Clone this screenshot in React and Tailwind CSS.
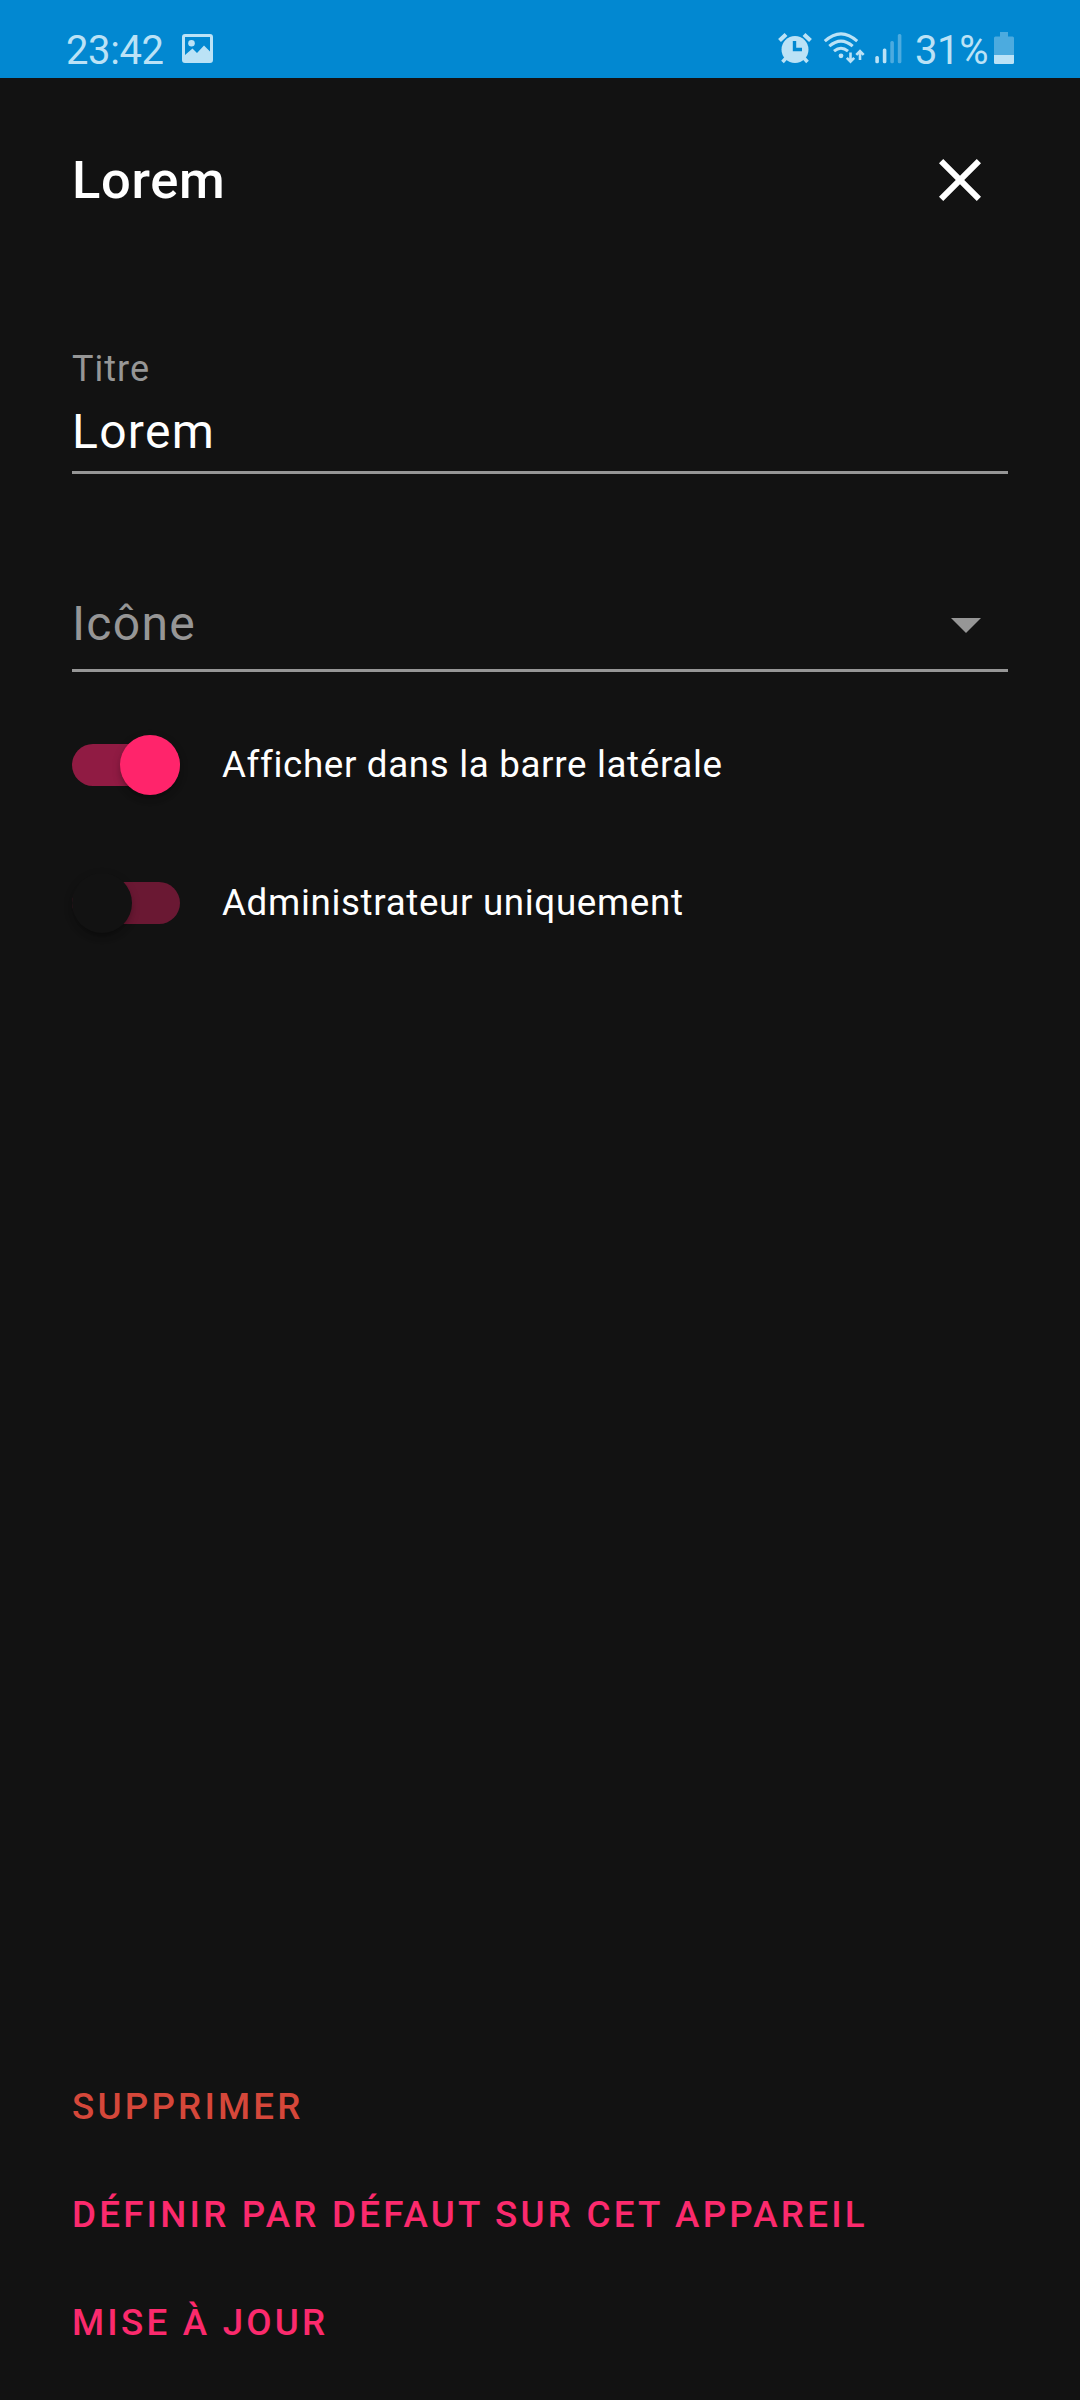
import React, { useState } from 'react';

const StatusBar = () => (
  <div className="flex h-[78px] shrink-0 items-start justify-between bg-[#0288d1] pl-[66px] pr-[66px] pt-[26px] text-[#bbe2f6]">
    <div className="flex items-start">
      <span className="mt-px w-[116px] text-[40px] leading-[48px] tracking-[-0.4px]">23:42</span>
      <svg width="31" height="29" viewBox="0 0 31 29" className="mt-2">
        <path
          fill="currentColor"
          fillRule="evenodd"
          d="M3 0H28Q31 0 31 3V26Q31 29 28 29H3Q0 29 0 26V3Q0 0 3 0ZM3 3V21L10.5 14.5L15 19L22 11.5L28 17.5V3Z"
        />
        <circle cx="9.5" cy="9.3" r="3.3" fill="currentColor" />
      </svg>
    </div>

    <div className="flex items-start">
      {/* alarm */}
      <svg width="34" height="34" viewBox="778 31 34 34" className="mt-[5px]">
        <g stroke="currentColor" strokeWidth="4.2" fill="none">
          <path d="M779.5 40.5L786 34.5M810.5 40.5L804 34.5" />
          <path d="M787 57L782.5 62M803 57L807.5 62" strokeWidth="3.6" />
        </g>
        <circle cx="795" cy="49.5" r="13.5" fill="currentColor" />
        <path d="M794.5 41V49.5H802" stroke="#0288d1" strokeWidth="3.4" fill="none" />
      </svg>
      {/* wifi */}
      <svg width="42" height="34" viewBox="823 31 42 34" className="ml-[11px] mt-[5px]">
        <g stroke="currentColor" strokeWidth="3" fill="none">
          <path d="M824.8 41.2Q841 26.5 857.2 41.2" />
          <path d="M829.3 46.2Q841 36 852.7 46.2" />
          <path d="M834 51.2Q841 45.2 848 51.2" />
          <path d="M850.5 52.5V61M846.8 57.8L850.5 61.6L854.2 57.8" strokeWidth="2.6" />
          <path d="M860 60V51.5M856.3 54.8L860 51L863.7 54.8" strokeWidth="2.6" />
        </g>
        <circle cx="841" cy="55.8" r="2.4" fill="currentColor" />
      </svg>
      {/* signal */}
      <svg width="27" height="34" viewBox="875 31 27 34" className="ml-[10px] mt-[5px]">
        <g fill="currentColor">
          <rect x="875.3" y="56" width="3.6" height="7.2" rx="1.5" />
          <rect x="882.8" y="48.5" width="3.6" height="14.7" rx="1.5" />
          <rect x="890.3" y="41" width="3.6" height="22.2" rx="1.5" opacity="0.4" />
          <rect x="897.8" y="34" width="3.6" height="29.2" rx="1.5" opacity="0.4" />
        </g>
      </svg>
      <span className="ml-[13px] mt-px w-[79px] whitespace-nowrap text-[40px] leading-[48px] tracking-[-0.4px]">31%</span>
      <svg width="20" height="34" viewBox="994 31 20 34" className="mt-[5px]">
        <g fill="currentColor">
          <path d="M1000 32H1008V36.5H1012.5Q1014 36.5 1014 38V55H994V38Q994 36.5 995.5 36.5H1000Z" opacity="0.4" />
          <path d="M994 55H1014V62.5Q1014 64 1012.5 64H995.5Q994 64 994 62.5Z" />
        </g>
      </svg>
    </div>
  </div>
);

const Toggle = ({ label, checked, onChange }) => (
  <label className="flex h-[138px] cursor-pointer items-center">
    <button
      type="button"
      role="switch"
      aria-checked={checked}
      onClick={() => onChange(!checked)}
      className={`flex h-[42px] w-[108px] items-center rounded-full ${
        checked ? 'justify-end bg-[#901b43]' : 'justify-start bg-[#6a1833]'
      }`}
    >
      <span
        className={`h-[60px] w-[60px] shrink-0 rounded-full shadow-[0_5px_6px_-3px_rgba(0,0,0,0.35),0_3px_10px_rgba(0,0,0,0.15)] ${
          checked ? 'bg-[#ff246b]' : 'bg-[#121212]'
        }`}
      />
    </button>
    <span className="ml-[42px] text-[36.75px] tracking-[0.65px] text-white">{label}</span>
  </label>
);

const actions = [
  { id: 'delete', name: 'Supprimer', color: 'text-[#d5473a]' },
  { id: 'default', name: 'Définir par défaut sur cet appareil', color: 'text-[#fb2a6d]' },
  { id: 'update', name: 'Mise à jour', color: 'text-[#fb2a6d]' }
];

const App = () => {
  const [sidebar, setSidebar] = useState(true);
  const [adminOnly, setAdminOnly] = useState(false);

  return (
    <div className="flex h-[2400px] w-[1080px] flex-col bg-[#121212] font-['Roboto',sans-serif] text-white">
      <StatusBar />

      {/* Dialog header */}
      <div className="flex h-[204px] shrink-0 items-center justify-between pl-[72px] pr-[84px]">
        <h2 className="text-[52.5px] font-medium tracking-[0.66px]">Lorem</h2>
        <button type="button" aria-label="Fermer">
          <svg width="72" height="72" viewBox="0 0 24 24" fill="currentColor">
            <path d="M19 6.41L17.59 5 12 10.59 6.41 5 5 6.41 10.59 12 5 17.59 6.41 19 12 13.41 17.59 19 19 17.59 13.41 12z" />
          </svg>
        </button>
      </div>

      {/* Form */}
      <div className="flex flex-col px-[72px] pt-6">
        <div className="h-[168px] border-b-[3px] border-[#969696] pt-[42px]">
          <div className="text-[36px] leading-[42px] tracking-[1px] text-[#969696]">Titre</div>
          <div className="mt-[14px] text-[48px] leading-[56px] tracking-[1.3px]">Lorem</div>
        </div>

        <div className="mt-[30px] flex h-[168px] items-end justify-between border-b-[3px] border-[#969696] pb-[17px] pr-[6px] text-[#969696]">
          <span className="text-[48px] leading-[56px] tracking-[1.3px]">Icône</span>
          <svg width="72" height="56" viewBox="0 0 72 56" fill="currentColor">
            <path d="M21 22H51L36 37z" />
          </svg>
        </div>

        <div className="mt-6">
          <Toggle label="Afficher dans la barre latérale" checked={sidebar} onChange={setSidebar} />
          <Toggle label="Administrateur uniquement" checked={adminOnly} onChange={setAdminOnly} />
        </div>
      </div>

      {/* Actions */}
      <div className="mt-auto flex flex-col items-start px-[72px] pb-[23px]">
        {actions.map((a) => (
          <button
            key={a.id}
            type="button"
            className={`h-[108px] text-[36.75px] font-medium uppercase tracking-[3.21px] ${a.color}`}
          >
            {a.name}
          </button>
        ))}
      </div>
    </div>
  );
};

export default App;
